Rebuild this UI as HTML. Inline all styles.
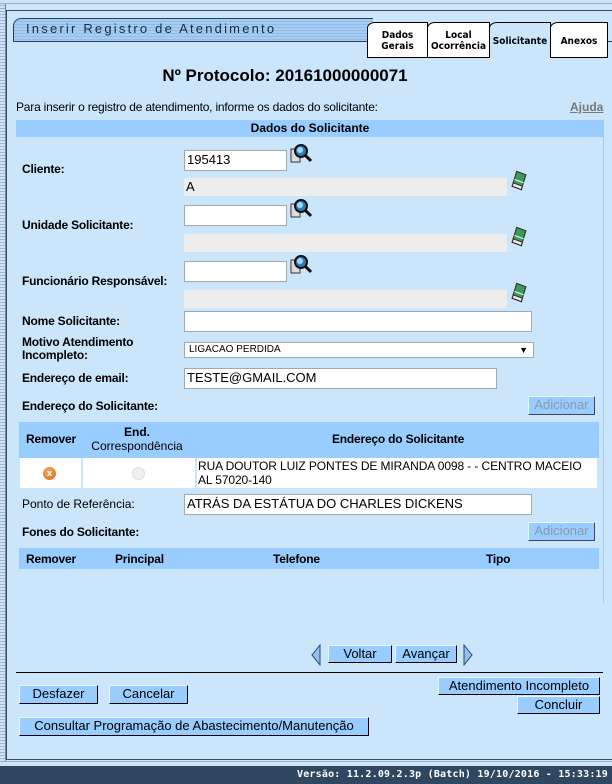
<!DOCTYPE html>
<html><head><meta charset="utf-8">
<style>
*{box-sizing:border-box;margin:0;padding:0}
body{width:612px;height:784px;position:relative;background:#cbe5fb;font-family:"Liberation Sans",Arial,sans-serif;font-size:12px;color:#000;overflow:hidden}
.a{position:absolute}
.lbl{position:absolute;font-weight:bold;font-size:12px;letter-spacing:-0.2px}
.inp{position:absolute;background:#fff;border:1px solid #a0a8b0;font-size:13px;padding:1px 2px;white-space:nowrap;overflow:hidden}
.ro{position:absolute;background:#ededed;font-size:13px;padding:1px 2px}
.btn{position:absolute;background:#99ccff;border:1px solid #000;border-top-color:#e8f4ff;border-left-color:#e8f4ff;font-size:13px;text-align:center;line-height:15px;white-space:nowrap}
.dis{color:#8a9aaa;border-color:#445;border-top-color:#e8f4ff;border-left-color:#e8f4ff}
.tab{position:absolute;background:#fff;border:1px solid #000;font-weight:bold;font-size:10px;text-align:center;line-height:11px;font-family:"DejaVu Sans Condensed","Liberation Sans",sans-serif}
.mag{position:absolute;width:22px;height:22px}
.er{position:absolute;width:16px;height:21px}
</style></head><body>
<div class="a" style="left:0;top:0;width:6px;height:762px;background:repeating-linear-gradient(#cfe3f6 0 2px,#9fb8d0 2px 3px);border-right:1px solid #6f8aa5"></div>
<div class="a" style="left:0;top:0;width:612px;height:4px;background:#cfe3f6;border-bottom:1px solid #9fb0c0"></div>
<div class="a" style="left:6px;top:10px;width:606px;height:750px;border:1px solid #3a4a5a;border-right:none"></div>
<div class="a" style="left:13px;top:18px;width:360px;height:24px;border:1px solid #2a3f5a;border-top-left-radius:8px;border-right:none;background:repeating-linear-gradient(#a8cdf2 0 2px,#8fbbe8 2px 3px)"></div>
<div class="a" style="left:26px;top:21px;font-size:13px;letter-spacing:2.2px;color:#1a2a44">Inserir Registro de Atendimento</div>
<div class="a" style="left:372px;top:41px;width:240px;height:1px;background:#2a3f5a"></div>
<div class="tab" style="left:367px;top:22px;width:61px;height:36px;padding-top:7px;border-top-left-radius:8px 6px">Dados<br>Gerais</div>
<div class="tab" style="left:427px;top:22px;width:63px;height:36px;padding-top:7px;border-top-left-radius:8px 6px">Local<br>Ocorrência</div>
<div class="tab" style="left:489px;top:22px;width:62px;height:36px;padding-top:13px;background:#cbe5fb;border-bottom:none;border-top-left-radius:8px 6px">Solicitante</div>
<div class="tab" style="left:550px;top:22px;width:58px;height:36px;padding-top:13px;border-top-left-radius:8px 6px">Anexos</div>

<div class="a" style="left:0;width:570px;top:66px;text-align:center;font-size:17px;font-weight:bold">Nº Protocolo: 20161000000071</div>
<div class="a" style="left:16px;top:100px;font-size:12px;letter-spacing:-0.2px">Para inserir o registro de atendimento, informe os dados do solicitante:</div>
<div class="a" style="left:570px;top:100px;font-size:12px;font-weight:bold;color:#777;text-decoration:underline">Ajuda</div>

<div class="a" style="left:16px;top:120px;width:588px;height:483px;border-right:1px solid #a8cdf2"></div>
<div class="a" style="left:16px;top:120px;width:588px;height:17px;background:#99ccff;text-align:center;font-weight:bold;line-height:17px">Dados do Solicitante</div>

<div class="lbl" style="left:22px;top:162px">Cliente:</div>
<div class="inp" style="left:184px;top:150px;width:103px;height:21px">195413</div>
<div class="ro" style="left:184px;top:178px;width:323px;height:18px">A</div>
<div class="lbl" style="left:22px;top:218px">Unidade Solicitante:</div>
<div class="inp" style="left:184px;top:205px;width:103px;height:21px"></div>
<div class="ro" style="left:184px;top:234px;width:323px;height:18px"></div>
<div class="lbl" style="left:22px;top:274px">Funcionário Responsável:</div>
<div class="inp" style="left:184px;top:261px;width:103px;height:21px"></div>
<div class="ro" style="left:184px;top:290px;width:323px;height:18px"></div>

<svg class="mag" style="left:290px;top:143px" viewBox="0 0 22 22"><rect x="1" y="6" width="9" height="13" fill="#ddd" stroke="#333"/><circle cx="11" cy="8" r="6" fill="#2a7fb8" stroke="#111" stroke-width="2"/><circle cx="10" cy="7" r="3" fill="#9fd8ff"/><path d="M15 12 L21 18" stroke="#111" stroke-width="3"/></svg>
<svg class="mag" style="left:290px;top:198px" viewBox="0 0 22 22"><rect x="1" y="6" width="9" height="13" fill="#ddd" stroke="#333"/><circle cx="11" cy="8" r="6" fill="#2a7fb8" stroke="#111" stroke-width="2"/><circle cx="10" cy="7" r="3" fill="#9fd8ff"/><path d="M15 12 L21 18" stroke="#111" stroke-width="3"/></svg>
<svg class="mag" style="left:290px;top:254px" viewBox="0 0 22 22"><rect x="1" y="6" width="9" height="13" fill="#ddd" stroke="#333"/><circle cx="11" cy="8" r="6" fill="#2a7fb8" stroke="#111" stroke-width="2"/><circle cx="10" cy="7" r="3" fill="#9fd8ff"/><path d="M15 12 L21 18" stroke="#111" stroke-width="3"/></svg>
<svg class="er" style="left:511px;top:170px" viewBox="0 0 14 18"><path d="M5 1 L13 4 L9 17 L1 14 Z" fill="#3c9a5a" stroke="#333"/><path d="M3 8 L11 11 M2 11 L10 14" stroke="#cfe" /><path d="M1 14 L9 17 L10 14 L2 11Z" fill="#eee" stroke="#333"/></svg>
<svg class="er" style="left:511px;top:226px" viewBox="0 0 14 18"><path d="M5 1 L13 4 L9 17 L1 14 Z" fill="#3c9a5a" stroke="#333"/><path d="M3 8 L11 11 M2 11 L10 14" stroke="#cfe" /><path d="M1 14 L9 17 L10 14 L2 11Z" fill="#eee" stroke="#333"/></svg>
<svg class="er" style="left:511px;top:282px" viewBox="0 0 14 18"><path d="M5 1 L13 4 L9 17 L1 14 Z" fill="#3c9a5a" stroke="#333"/><path d="M3 8 L11 11 M2 11 L10 14" stroke="#cfe" /><path d="M1 14 L9 17 L10 14 L2 11Z" fill="#eee" stroke="#333"/></svg>

<div class="lbl" style="left:22px;top:314px">Nome Solicitante:</div>
<div class="inp" style="left:184px;top:311px;width:348px;height:21px"></div>
<div class="lbl" style="left:22px;top:336px;line-height:13px">Motivo Atendimento<br>Incompleto:</div>
<div class="inp" style="left:184px;top:342px;width:350px;height:16px;font-size:10px;padding:1px 4px;line-height:12px">LIGACAO PERDIDA<span style="position:absolute;right:5px;top:1px;font-size:9px">▼</span></div>
<div class="lbl" style="left:22px;top:371px">Endereço de email:</div>
<div class="inp" style="left:184px;top:368px;width:313px;height:21px">TESTE@GMAIL.COM</div>

<div class="lbl" style="left:22px;top:399px">Endereço do Solicitante:</div>
<div class="btn dis" style="left:528px;top:396px;width:67px;height:19px">Adicionar</div>
<div class="a" style="left:19px;top:422px;width:580px;height:36px;background:#99ccff"></div>
<div class="lbl" style="left:26px;top:432px">Remover</div>
<div class="a" style="left:76px;top:425px;width:122px;text-align:center;line-height:14px;font-size:12px"><b>End.</b><br><span style="font-weight:normal">Correspondência</span></div>
<div class="lbl" style="left:198px;width:400px;top:432px;text-align:center">Endereço do Solicitante</div>
<div class="a" style="left:20px;top:458px;width:61px;height:30px;background:#fff"></div>
<div class="a" style="left:83px;top:458px;width:112px;height:30px;background:#fff"></div>
<div class="a" style="left:197px;top:458px;width:400px;height:30px;background:#fff;font-size:12px;line-height:14px;padding:1px 1px;letter-spacing:-0.1px">RUA DOUTOR LUIZ PONTES DE MIRANDA 0098 - - CENTRO MACEIO AL 57020-140</div>
<div class="a" style="left:43px;top:467px;width:13px;height:13px;border-radius:50%;background:radial-gradient(circle at 40% 35%,#f7a860,#d86a10);color:#fff;font-size:9px;font-weight:bold;text-align:center;line-height:13px">x</div>
<div class="a" style="left:132px;top:467px;width:13px;height:13px;border-radius:50%;background:#f0f0f0;border:1px solid #ddd"></div>

<div class="a" style="left:22px;top:497px;font-size:12px">Ponto de Referência:</div>
<div class="inp" style="left:184px;top:494px;width:348px;height:21px">ATRÁS DA ESTÁTUA DO CHARLES DICKENS</div>
<div class="lbl" style="left:22px;top:525px">Fones do Solicitante:</div>
<div class="btn dis" style="left:528px;top:522px;width:67px;height:19px">Adicionar</div>
<div class="a" style="left:19px;top:548px;width:580px;height:21px;background:#99ccff"></div>
<div class="lbl" style="left:26px;top:552px">Remover</div>
<div class="lbl" style="left:115px;top:552px">Principal</div>
<div class="lbl" style="left:273px;top:552px">Telefone</div>
<div class="lbl" style="left:486px;top:552px">Tipo</div>

<svg class="a" style="left:311px;top:644px" width="10" height="22" viewBox="0 0 10 22"><path d="M9 1 L1 11 L9 21 Z" fill="#8ec0f0" stroke="#2a4a6a"/></svg>
<div class="btn" style="left:328px;top:645px;width:64px;height:18px">Voltar</div>
<div class="btn" style="left:395px;top:645px;width:62px;height:18px">Avançar</div>
<svg class="a" style="left:463px;top:644px" width="10" height="22" viewBox="0 0 10 22"><path d="M1 1 L9 11 L1 21 Z" fill="#8ec0f0" stroke="#2a4a6a"/></svg>
<div class="a" style="left:16px;top:672px;width:587px;height:1px;background:#000"></div>

<div class="btn" style="left:19px;top:685px;width:79px;height:19px">Desfazer</div>
<div class="btn" style="left:109px;top:685px;width:79px;height:19px">Cancelar</div>
<div class="btn" style="left:438px;top:677px;width:162px;height:18px">Atendimento Incompleto</div>
<div class="btn" style="left:517px;top:696px;width:83px;height:18px">Concluir</div>
<div class="btn" style="left:19px;top:717px;width:350px;height:19px">Consultar Programação de Abastecimento/Manutenção</div>

<div class="a" style="left:0;top:761px;width:612px;height:5px;background:#cfe3f6;border-top:1px solid #9fb0c0"></div>
<div class="a" style="left:0;top:766px;width:612px;height:18px;background:#2f4761;color:#fff;font-family:'DejaVu Sans Mono','Liberation Mono',monospace;font-weight:bold;font-size:10px;text-align:right;padding-right:4px;line-height:17px;letter-spacing:0.2px">Versão: 11.2.09.2.3p (Batch) 19/10/2016 - 15:33:19</div>
</body></html>
